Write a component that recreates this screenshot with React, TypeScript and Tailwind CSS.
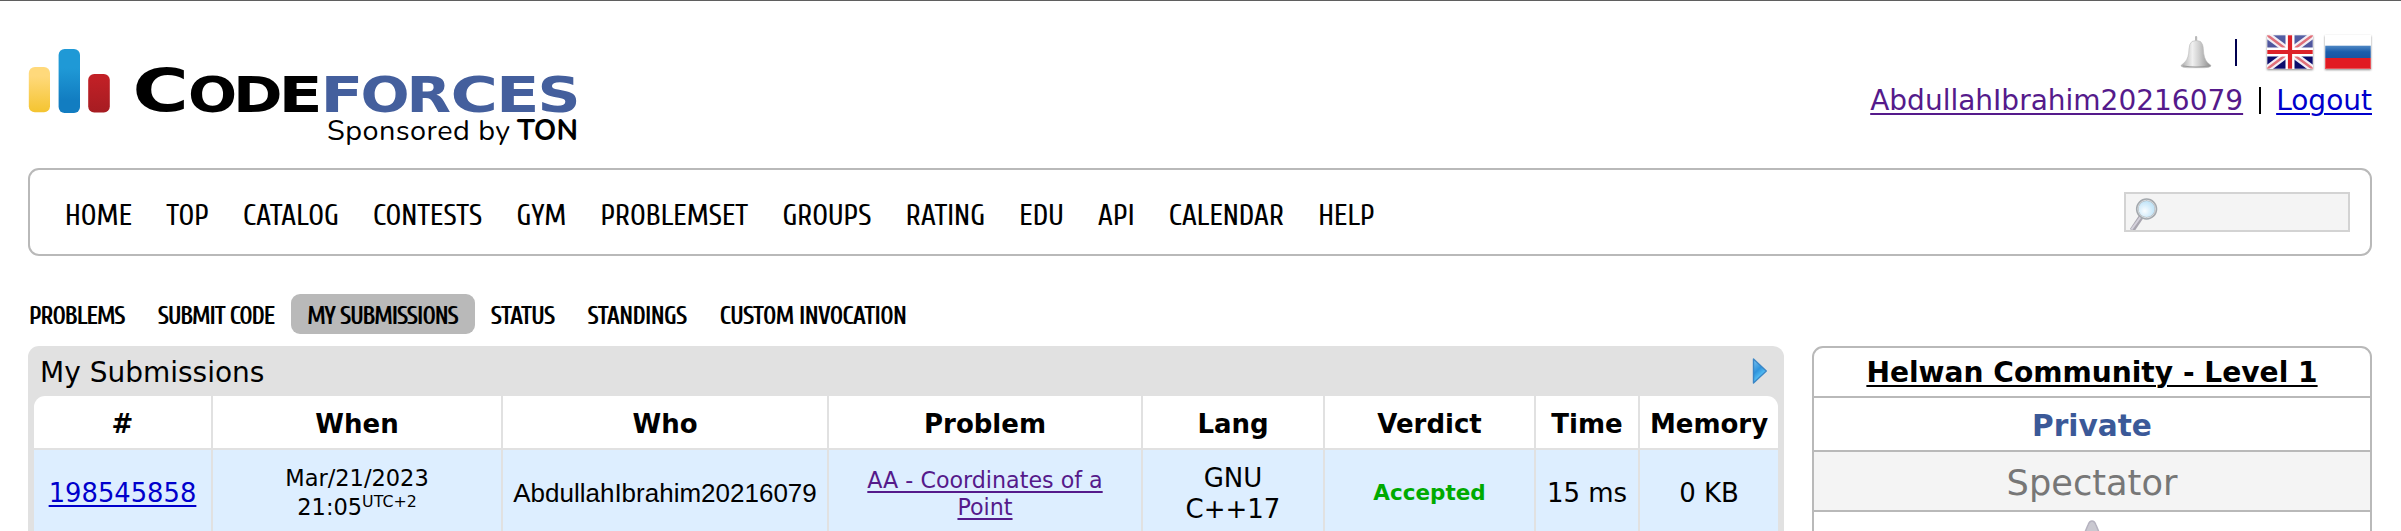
import type { ReactNode } from "react";

const NAV = ["HOME", "TOP", "CATALOG", "CONTESTS", "GYM", "PROBLEMSET", "GROUPS", "RATING", "EDU", "API", "CALENDAR", "HELP"];
const TABS: [string, string][] = [
  ["PROBLEMS", "tracking-[-1.08px]"],
  ["SUBMIT CODE", "tracking-[-1.08px]"],
  ["MY SUBMISSIONS", "tracking-[-1.08px] rounded-[9px] bg-[#b9b9b9]"],
  ["STATUS", "tracking-[-0.75px]"],
  ["STANDINGS", "tracking-[-0.7px]"],
  ["CUSTOM INVOCATION", "tracking-[-0.66px]"],
];
const HEADS = ["#", "When", "Who", "Problem", "Lang", "Verdict", "Time", "Memory"];

function Logo() {
  return (
    <svg width="556" height="104" viewBox="28 46 556 104" className="block">
      <defs>
        <linearGradient id="ly" x1="0" y1="0" x2="0" y2="1"><stop offset="0.2" stopColor="#ffd97b" /><stop offset="1" stopColor="#f4c430" /></linearGradient>
        <linearGradient id="lb" x1="0" y1="0" x2="0" y2="1"><stop offset="0.3" stopColor="#1f99d6" /><stop offset="0.8" stopColor="#127dc1" /></linearGradient>
        <linearGradient id="lr" x1="0" y1="0" x2="0" y2="1"><stop offset="0.1" stopColor="#c12026" /><stop offset="1" stopColor="#a61c22" /></linearGradient>
      </defs>
      <rect x="28.8" y="67" width="21.2" height="45.3" rx="6" fill="url(#ly)" />
      <rect x="58.6" y="49" width="21.4" height="64" rx="6" fill="url(#lb)" />
      <rect x="88.2" y="74" width="21.6" height="38.6" rx="6" fill="url(#lr)" />
      <g className="font-['DejaVu_Sans'] font-bold">
        <text transform="translate(132.4 111.4) scale(1.3 1)" fontSize="59">C</text>
        <g fontSize="49">
          <text transform="translate(187.9 111.6) scale(1.18 1)">O</text>
          <text transform="translate(233 111.6) scale(1.22 1)">D</text>
          <text transform="translate(278.5 111.6) scale(1.32 1)">E</text>
        </g>
        <g fontSize="49" fill="#445f9d">
          <text transform="translate(320.5 111.6) scale(1.28 1)">F</text>
          <text transform="translate(360.4 111.6) scale(1.18 1)">O</text>
          <text transform="translate(406.6 111.6) scale(1.18 1)">R</text>
          <text transform="translate(450.6 111.6) scale(1.32 1)">C</text>
          <text transform="translate(496 111.6) scale(1.3 1)">E</text>
          <text transform="translate(537.6 111.6) scale(1.22 1)">S</text>
        </g>
      </g>
      <text x="327" y="139.6" fontSize="28.8" textLength="183" className="font-['Nunito','Open_Sans',sans-serif]">Sponsored by</text>
      <text x="517" y="139.6" fontSize="28.8" textLength="61" className="font-['Nunito','Open_Sans',sans-serif] font-bold">TON</text>
    </svg>
  );
}

function Bell() {
  return (
    <svg width="32" height="34" viewBox="0 0 32 34">
      <defs>
        <linearGradient id="bell" x1="0" x2="1"><stop offset="0" stopColor="#aaa" /><stop offset="0.38" stopColor="#f0f0f0" /><stop offset="0.6" stopColor="#d0d0d0" /><stop offset="1" stopColor="#8c8c8c" /></linearGradient>
      </defs>
      <rect x="15" y="1" width="2.2" height="7" rx="1" fill="#b9b9b9" />
      <path d="M12 6.5Q16 4.5 20.5 6.5Q23.3 9 23.3 14Q23.8 24 27.5 27.5L31 30.5Q31 32.5 25 32.7H7Q1 32.5 1 30.5L5 27Q8.8 23 9 14Q9.2 8.5 12 6.5Z" fill="url(#bell)" stroke="#bbb" strokeWidth="0.6" />
      <path d="M3 31Q16 33 29 31" stroke="#999" strokeWidth="1.2" fill="none" />
    </svg>
  );
}

function FlagUK() {
  return (
    <svg width="46" height="34" viewBox="0 0 46 34" className="shadow-[0_1px_2px_rgba(0,0,0,0.45)]">
      <defs>
        <linearGradient id="uk" x1="0" y1="0" x2="0" y2="1"><stop offset="0" stopColor="#5560a5" /><stop offset="0.5" stopColor="#4b4f98" /><stop offset="0.55" stopColor="#0c0c6c" /><stop offset="1" stopColor="#0c0c6c" /></linearGradient>
      </defs>
      <rect width="46" height="34" fill="url(#uk)" />
      <path d="M0 0L46 34M46 0L0 34" stroke="#f3eef4" strokeWidth="7" />
      <path d="M0 0L46 34M46 0L0 34" stroke="#e0707a" strokeWidth="2.6" />
      <path d="M23 0V34M0 17H46" stroke="#fff" strokeWidth="9" />
      <path d="M23 0V34M0 17H46" stroke="#dd2229" strokeWidth="4.2" />
      <rect x="0.5" y="0.5" width="45" height="33" fill="none" stroke="#fff" strokeOpacity="0.3" />
    </svg>
  );
}

function FlagRU() {
  return (
    <svg width="46" height="34" viewBox="0 0 46 34" className="shadow-[0_1px_2px_rgba(0,0,0,0.45)]">
      <defs>
        <linearGradient id="ru" x1="0" y1="0" x2="0" y2="1"><stop offset="0" stopColor="#4f88c5" /><stop offset="0.5" stopColor="#1c5dab" /><stop offset="1" stopColor="#1a55a2" /></linearGradient>
      </defs>
      <rect width="46" height="34" fill="#fff" />
      <rect y="10.7" width="46" height="12.3" fill="url(#ru)" />
      <rect y="23" width="46" height="11" fill="#e11a22" />
      <rect x="0.5" y="0.5" width="45" height="33" fill="none" stroke="#fff" strokeOpacity="0.25" />
    </svg>
  );
}

function Magnifier() {
  return (
    <svg width="32" height="34" viewBox="0 0 32 34" className="block">
      <defs>
        <radialGradient id="lens" cx="0.4" cy="0.6"><stop offset="0" stopColor="#fafdff" /><stop offset="1" stopColor="#c3e5f8" /></radialGradient>
      </defs>
      <path d="M12 21L3 34.5" stroke="#a9a6b0" strokeWidth="5" />
      <path d="M11.5 21L2.4 33.5" stroke="#d5d2dc" strokeWidth="2" />
      <circle cx="17.6" cy="13" r="9.4" fill="url(#lens)" stroke="#a3a8ad" strokeWidth="2.6" />
      <circle cx="17.6" cy="13" r="8.8" fill="none" stroke="#d9dde0" strokeWidth="1" />
    </svg>
  );
}

function Cell({ children, className = "" }: { children: ReactNode; className?: string }) {
  return <div className={`flex flex-col items-center justify-center bg-[#ddeeff] text-center text-[26px] leading-[31px] ${className}`}>{children}</div>;
}

export default function App() {
  return (
    <div className="flex h-[531px] w-full flex-col overflow-hidden border-t border-[#5f5f5f] bg-white pr-[29px] pl-[28px] font-['DejaVu_Sans',sans-serif] whitespace-nowrap text-black">
      <header className="flex h-[167px] shrink-0 justify-between pt-[45px]">
        <Logo />
        <div className="-mt-[12px] flex flex-col items-end">
          <div className="flex h-[36px] items-center">
            <Bell />
            <span className="ml-[23px] h-[27px] w-[2px] bg-[#00004f]" />
            <span className="ml-[30px] flex"><FlagUK /></span>
            <span className="mr-px ml-[12px] flex"><FlagRU /></span>
          </div>
          <div className="mt-[12px] flex items-center text-[28px] leading-[37px]">
            <a className="text-[#551a8b] underline decoration-2 underline-offset-[3px]">AbdullahIbrahim20216079</a>
            <span className="mr-[15px] ml-[16px] h-[27px] w-[2px] bg-black" />
            <a className="text-[#0000cc] underline decoration-2 underline-offset-[3px]">Logout</a>
          </div>
        </div>
      </header>

      <nav className="flex h-[88px] shrink-0 items-center justify-between rounded-[11px] border-2 border-[#b9b9b9] pr-[20px] pl-[35px]">
        <div className="flex gap-[34.2px] pt-[8px] font-['Cuprum','Roboto_Condensed',sans-serif] text-[29.8px] leading-[36px]">
          {NAV.map((n) => <a key={n}>{n}</a>)}
        </div>
        <div className="h-[40px] w-[226px] overflow-hidden border-2 border-[#d3d3d3] bg-[#f4f4f4] pt-[2px] pl-[3px]"><Magnifier /></div>
      </nav>

      <div className="mt-[38px] -ml-[15px] flex h-[40px] shrink-0 font-['Cuprum','Roboto_Condensed',sans-serif] text-[24.4px] leading-[45px] font-bold">
        {TABS.map(([t, c]) => <a key={t} className={`pr-[17px] pl-[16px] ${c}`}>{t}</a>)}
      </div>

      <main className="mt-[12px] flex justify-between">
        <section className="w-[1756px] rounded-t-[11px] bg-[#e1e1e1] px-[6px]">
          <div className="flex h-[50px] items-center justify-between pr-[10px] pl-[6px] text-[28px]">
            <span className="pt-[3px]">My Submissions</span>
            <svg width="16" height="28" viewBox="0 0 16 28">
              <defs><linearGradient id="ar" x1="0" y1="0" x2="0.5" y2="1"><stop offset="0" stopColor="#7cc4f2" /><stop offset="0.5" stopColor="#2f93dc" /><stop offset="0.8" stopColor="#55c0f5" /></linearGradient></defs>
              <path d="M1.5 2L14.3 14L1.5 26Z" fill="url(#ar)" stroke="#3b86c6" strokeWidth="1.4" strokeLinejoin="round" />
            </svg>
          </div>
          <div className="grid grid-cols-[177px_288px_324px_312px_180px_209px_102px_138px] grid-rows-[52px_86px] gap-[2px] overflow-hidden rounded-t-[11px]">
            {HEADS.map((h) => <div key={h} className="flex items-center justify-center bg-white pt-[5px] text-[26px] font-bold">{h}</div>)}
            <Cell><a className="text-[25.8px] text-[#0000cc] underline decoration-2 underline-offset-[3px]">198545858</a></Cell>
            <Cell>
              <span className="text-[22.5px] leading-[29px]">Mar/21/2023</span>
              <span className="flex text-[22.5px] leading-[29px]">21:05<span className="-mt-[6px] text-[15.8px]">UTC+2</span></span>
            </Cell>
            <Cell className="font-['Liberation_Sans',sans-serif]">AbdullahIbrahim20216079</Cell>
            <Cell className="pt-px">
              <a className="text-[22.2px] leading-[27px] text-[#551a8b] underline decoration-2 underline-offset-[3px]">AA - Coordinates of a<br />Point</a>
            </Cell>
            <Cell className="pt-px"><span>GNU<br />C++17</span></Cell>
            <Cell className="pb-px"><span className="text-[21.5px] font-bold text-[#00aa00]">Accepted</span></Cell>
            <Cell>15 ms</Cell>
            <Cell>0 KB</Cell>
          </div>
        </section>

        <aside className="w-[560px] divide-y-2 divide-[#b9b9b9] rounded-t-[11px] border-2 border-[#b9b9b9] text-center">
          <div className="h-[50px] text-[28.1px] leading-[49px] font-bold"><a className="underline decoration-2 underline-offset-[3px]">Helwan Community - Level 1</a></div>
          <div className="h-[54px] pt-[2px] text-[29.6px] leading-[52px] font-bold text-[#3b5998]">Private</div>
          <div className="h-[60px] bg-[#f4f4f4] pt-[2px] text-[35.2px] leading-[58px] text-[#777]">Spectator</div>
          <div className="flex h-[60px] justify-center pt-[8px]">
            <svg width="36" height="30" viewBox="0 0 36 30">
              <path d="M18 1Q20.5 1 22 5L30 24H6L14 5Q15.5 1 18 1Z" fill="#c9c8d0" stroke="#b5b2bf" strokeWidth="1.5" />
            </svg>
          </div>
        </aside>
      </main>
    </div>
  );
}
